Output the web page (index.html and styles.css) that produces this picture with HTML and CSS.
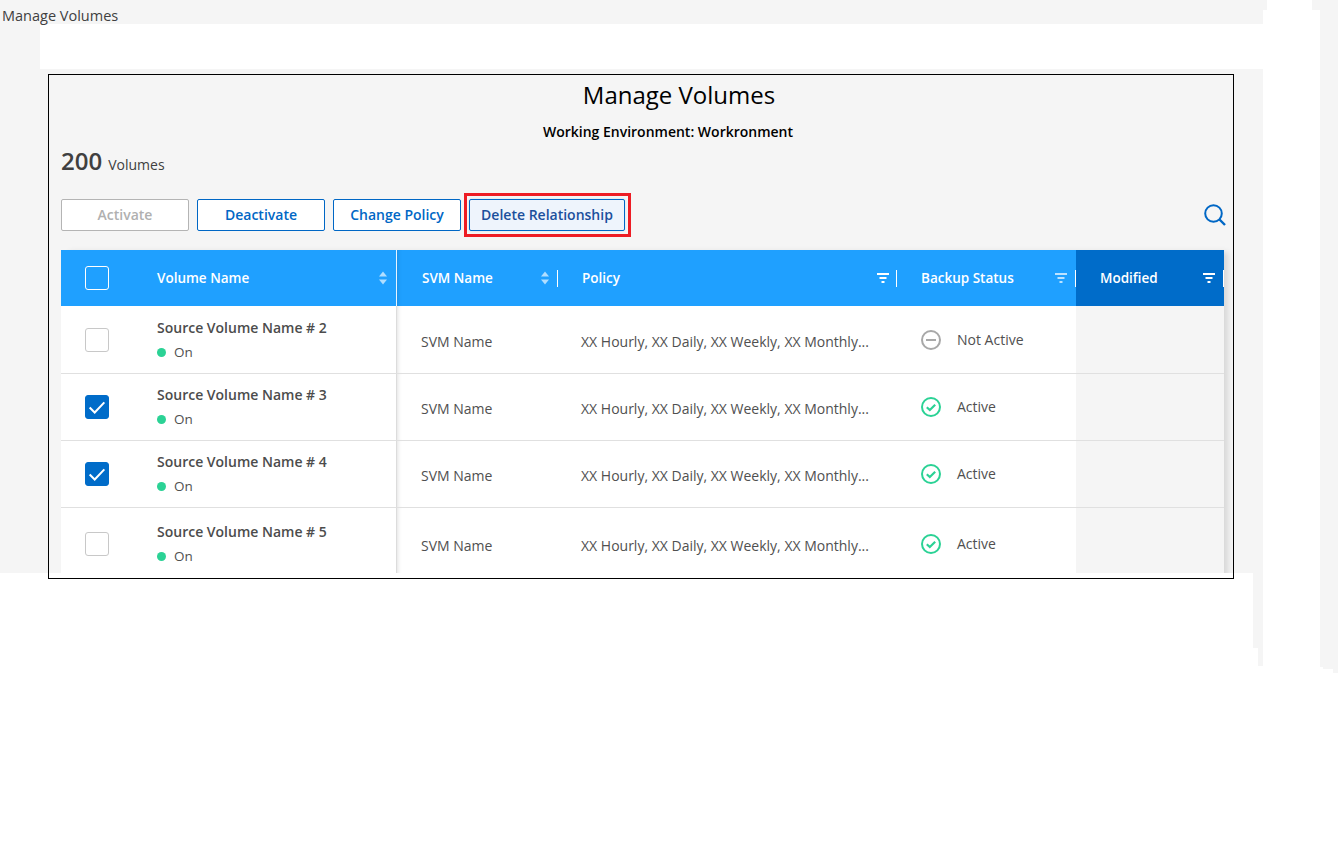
FILE: index.html
```html
<!DOCTYPE html>
<html lang="en">
<head>
<meta charset="utf-8">
<title>Manage Volumes</title>
<link rel="stylesheet" href="styles.css">
</head>
<body>
<svg class="defs" width="0" height="0" aria-hidden="true">
  <symbol id="sort" viewBox="0 0 8 14"><path d="M4 0.5 8 5.5H0Z" fill="#fff" opacity=".65"/><path d="M4 13.5 0 8.5H8Z" fill="#fff" opacity=".65"/></symbol>
  <symbol id="filter" viewBox="0 0 12 10"><path d="M0 0H12V2H0ZM2.5 4H9.5V6H2.5ZM4.5 8H7.5V10H4.5Z" fill="#fff"/></symbol>
  <symbol id="tick" viewBox="0 0 24 24"><circle cx="12" cy="12" r="9" fill="none" stroke="#2bd295" stroke-width="2"/><path d="M7.8 12.2 10.8 15 16.2 9.8" fill="none" stroke="#2bd295" stroke-width="2.2"/></symbol>
  <symbol id="minus" viewBox="0 0 24 24"><circle cx="12" cy="12" r="9" fill="none" stroke="#a8a8a8" stroke-width="2"/><path d="M7 12H17" fill="none" stroke="#a8a8a8" stroke-width="2"/></symbol>
  <symbol id="check" viewBox="0 0 24 24"><path d="M4 12.5 9.5 18 20 7" fill="none" stroke="#fff" stroke-width="2.2"/></symbol>
</svg>

<main class="page">
  <div class="crumb">Manage Volumes</div>
  <section class="frame">
    <div class="panel">
      <h1 class="title">Manage Volumes</h1>
      <p class="subtitle">Working Environment: Workronment</p>
      <div class="count"><span class="count-num">200</span><span class="count-label">Volumes</span></div>
      <div class="toolbar">
        <button class="btn btn-off">Activate</button>
        <button class="btn">Deactivate</button>
        <button class="btn">Change Policy</button>
        <span class="callout"><button class="btn btn-hot">Delete Relationship</button></span>
        <svg class="search" viewBox="0 0 22 22"><circle cx="9.5" cy="9.5" r="8.3" fill="none" stroke="#0067c5" stroke-width="2"/><path d="M15.5 15.5 21 21" fill="none" stroke="#0067c5" stroke-width="2.4"/></svg>
      </div>
      <div class="table">
        <div class="row head">
          <div class="cell"><span class="box box-head"></span></div>
          <div class="cell th col-name">Volume Name<svg class="ic-sort sort-a"><use href="#sort"/></svg></div>
          <div class="cell th col-svm">SVM Name<svg class="ic-sort sort-b"><use href="#sort"/></svg><i class="sep"></i></div>
          <div class="cell th col-policy">Policy<svg class="ic-filter"><use href="#filter"/></svg><i class="sep"></i></div>
          <div class="cell th col-status">Backup Status<svg class="ic-filter faded"><use href="#filter"/></svg><i class="sep"></i></div>
          <div class="cell th col-mod">Modified<svg class="ic-filter"><use href="#filter"/></svg><i class="sep"></i></div>
        </div>

        <div class="row">
          <div class="cell"><span class="box"></span></div>
          <div class="cell col-name"><div class="vol">Source Volume Name # 2</div><div class="state"><i class="dot"></i>On</div></div>
          <div class="cell col-svm txt">SVM Name</div>
          <div class="cell col-policy txt">XX Hourly, XX Daily, XX Weekly, XX Monthly...</div>
          <div class="cell col-status"><svg class="ic-status"><use href="#minus"/></svg><span class="status-text">Not Active</span></div>
          <div class="cell col-mod"></div>
        </div>
        <div class="row">
          <div class="cell"><span class="box box-on"><svg class="ic-check"><use href="#check"/></svg></span></div>
          <div class="cell col-name"><div class="vol">Source Volume Name # 3</div><div class="state"><i class="dot"></i>On</div></div>
          <div class="cell col-svm txt">SVM Name</div>
          <div class="cell col-policy txt">XX Hourly, XX Daily, XX Weekly, XX Monthly...</div>
          <div class="cell col-status"><svg class="ic-status"><use href="#tick"/></svg><span class="status-text">Active</span></div>
          <div class="cell col-mod"></div>
        </div>
        <div class="row">
          <div class="cell"><span class="box box-on"><svg class="ic-check"><use href="#check"/></svg></span></div>
          <div class="cell col-name"><div class="vol">Source Volume Name # 4</div><div class="state"><i class="dot"></i>On</div></div>
          <div class="cell col-svm txt">SVM Name</div>
          <div class="cell col-policy txt">XX Hourly, XX Daily, XX Weekly, XX Monthly...</div>
          <div class="cell col-status"><svg class="ic-status"><use href="#tick"/></svg><span class="status-text">Active</span></div>
          <div class="cell col-mod"></div>
        </div>
        <div class="row row-tall">
          <div class="cell"><span class="box"></span></div>
          <div class="cell col-name"><div class="vol">Source Volume Name # 5</div><div class="state"><i class="dot"></i>On</div></div>
          <div class="cell col-svm txt">SVM Name</div>
          <div class="cell col-policy txt">XX Hourly, XX Daily, XX Weekly, XX Monthly...</div>
          <div class="cell col-status"><svg class="ic-status"><use href="#tick"/></svg><span class="status-text">Active</span></div>
          <div class="cell col-mod"></div>
        </div>
      </div>
    </div>
  </section>
</main>

<div class="band"></div>
<div class="mask"></div>
</body>
</html>
```

FILE: styles.css
```css
* { box-sizing: border-box; }
html, body { margin: 0; height: 844px; overflow: hidden; background: #fff; }
body { font-family: "Open Sans", "Liberation Sans", sans-serif; color: #404040; position: relative; }
.defs { position: absolute; }

.page { height: 673px; background: #f5f5f5; }
.crumb { height: 74px; padding: 7px 0 0 2px; font-size: 14.5px; line-height: 18px; color: #404040; position: relative; z-index: 3; }

.band { position: absolute; left: 40px; top: 24px; width: 1223px; height: 45px; background: #fff; z-index: 1; }
.mask {
  position: absolute; inset: 0; background: #fff; z-index: 1;
  clip-path: polygon(
    0 573px, 1253px 573px, 1253px 648px, 1258px 648px, 1258px 666px, 1263px 666px,
    1263px 10px, 1267px 10px, 1267px 0, 1312px 0, 1312px 10px, 1320px 10px,
    1320px 667px, 1323px 667px, 1323px 669px, 1333px 669px, 1333px 673px, 1338px 673px,
    1338px 844px, 0 844px);
}

.frame { position: relative; z-index: 2; margin-left: 48px; width: 1186px; height: 505px; border: 1px solid #000; background: #fff; }
.panel { height: 498px; background: #f5f5f5; padding: 0 0 0 12px; overflow: hidden; }

.title { margin: 0; padding: 4px 0 0 64px; font-size: 24px; font-weight: 400; line-height: 32px; height: 41px; text-align: center; color: #000; }
.subtitle { margin: 0; padding: 6px 0 0 42px; font-size: 14px; font-weight: 600; line-height: 20px; height: 24px; text-align: center; color: #000; }
.count { display: flex; align-items: baseline; height: 37px; padding-top: 4px; color: #404040; }
.count-num { font-size: 24px; font-weight: 600; line-height: 33px; }
.count-label { font-size: 14px; font-weight: 500; margin-left: 6px; }

.toolbar { display: flex; align-items: center; gap: 8px; height: 32px; margin-top: 22px; margin-bottom: 19px; width: 1164px; }
.btn { width: 128px; height: 32px; padding: 0 0 2px; border: 1px solid #0067c5; border-radius: 2px; background: #fff; color: #0067c5; font: 600 14px "Open Sans", sans-serif; }
.btn-off { border-color: #b4b4b4; color: #b0b0b0; }
.callout { display: block; border: 3px solid #ed1c24; padding: 3px 3px 3px 2px; margin: 0 -6px 0 -5px; flex: none; width: 167px; height: 44px; }
.btn-hot { width: 156px; background: #eef4fc; color: #1b4f9c; box-shadow: 0 0 2px #c8d6ea; }
.search { width: 22px; height: 22px; margin-left: auto; margin-right: -1px; }

.table { width: 1163px; box-shadow: 6px 0 6px -2px rgba(0,0,0,.12); }
.row { display: grid; grid-template-columns: 96px 240px 160px 340px 179px 148px; height: 67px; background: #fff; }
.head { height: 56px; background: #1fa0ff; }
.row:not(.head) .cell { border-bottom: 1px solid #e0e0e0; }
.head + .row { height: 68px; }
.head + .row .cell { padding-top: 1px; }
.row-tall { height: 73px; }
.cell { position: relative; display: flex; align-items: center; font-size: 14px; }
.cell:first-child { padding-left: 24px; }
.col-name { flex-direction: column; align-items: flex-start; justify-content: center; border-right: 1px solid #dcdcdc; }
.th.col-name { flex-direction: row; align-items: center; justify-content: flex-start; }
.col-svm { padding-left: 24px; box-shadow: inset 5px 0 4px -4px rgba(0,0,0,.12); }
.col-policy { padding-left: 24px; }
.col-status { padding-left: 24px; color: #505050; }
.col-mod { background: #f5f5f5; padding-left: 24px; }
.txt { padding-top: 3px; color: #505050; }
.head + .row .txt { padding-top: 4px; }
.status-text { margin-bottom: 2px; }

.th { font-size: 13.5px; font-weight: 600; color: #fff; }
.th.col-mod { background: #006cc9; }
.head .col-name { border-right-color: #e8f4ff; }
.head .col-svm { padding-left: 25px; }
.head .col-policy { padding-left: 25px; }
.sep { position: absolute; right: 0; top: 20px; width: 1px; height: 17px; background: #fff; }
.col-svm .sep { right: -1px; }
.ic-sort { position: absolute; width: 8px; height: 14px; top: 21px; }
.sort-a { right: 9px; }
.sort-b { right: 8px; }
.ic-filter { position: absolute; width: 12px; height: 10px; top: 23px; right: 8px; }
.col-status .ic-filter { right: 9px; }
.col-mod .ic-filter { right: 9px; }
.faded { opacity: .7; }

.box { display: flex; align-items: center; justify-content: center; width: 24px; height: 24px; border: 1px solid #c8c8c8; border-radius: 3px; background: #fff; }
.box-head { background: #1fa0ff; border-color: #fff; }
.box-on { background: #006cc9; border-color: #006cc9; }
.ic-check { width: 22px; height: 22px; }

.vol { font-size: 14px; font-weight: 600; line-height: 18px; color: #4c4c4c; }
.state { display: flex; align-items: center; font-size: 13.5px; line-height: 18px; margin-top: 6px; color: #505050; }
.dot { width: 9px; height: 9px; border-radius: 50%; background: #2bd295; margin-right: 8px; }
.ic-status { width: 24px; height: 24px; margin-right: 14px; margin-left: -2px; flex: none; }
```
